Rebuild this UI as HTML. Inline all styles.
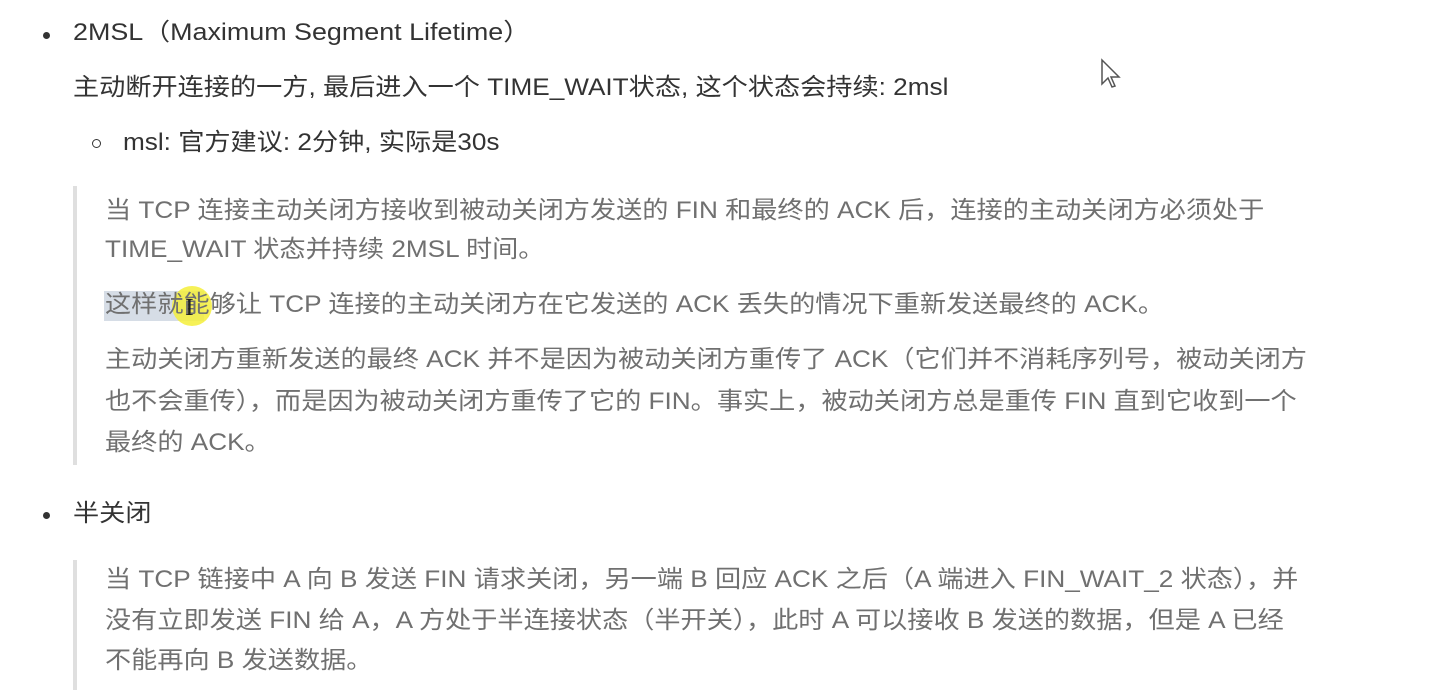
<!DOCTYPE html>
<html><head><meta charset="utf-8"><style>
body{margin:0;width:1451px;height:698px;background:#fff;overflow:hidden;position:relative;font-family:"Liberation Sans","Noto Sans CJK SC",sans-serif;font-size:24px;}
.t{position:absolute;white-space:nowrap;line-height:30px;transform:scaleX(1.09);transform-origin:0 50%;}
.d{color:#333}
.q{color:#707070}
.bar{position:absolute;left:73px;width:4px;background:#dfdfdf}
.dot{position:absolute;width:7px;height:7px;border-radius:50%;background:#333}
.circ{position:absolute;width:7px;height:7px;border-radius:50%;border:1.5px solid #333}
</style></head><body>
<div class="dot" style="left:43px;top:32px"></div>
<div class="t d" style="left:73px;top:18px;transform:scaleX(1.12)">2MSL（Maximum Segment Lifetime）</div>
<div class="t d" style="left:73px;top:73px">主动断开连接的一方, 最后进入一个 TIME_WAIT状态, 这个状态会持续: 2msl</div>
<div class="circ" style="left:92px;top:139px"></div>
<div class="t d" style="left:123px;top:128px">msl: 官方建议: 2分钟, 实际是30s</div>
<div class="bar" style="top:186px;height:279px"></div>
<div class="t q" style="left:105px;top:196px">当 TCP 连接主动关闭方接收到被动关闭方发送的 FIN 和最终的 ACK 后，连接的主动关闭方必须处于</div>
<div class="t q" style="left:105px;top:235px">TIME_WAIT 状态并持续 2MSL 时间。</div>
<div style="position:absolute;left:104px;top:291px;width:100px;height:30px;background:#d6dde6"></div>
<div style="position:absolute;left:172px;top:286px;width:40px;height:40px;border-radius:50%;background:#f4ef3a;opacity:.85"></div>
<div class="t q" style="left:105px;top:290px">这样就能够让 TCP 连接的主动关闭方在它发送的 ACK 丢失的情况下重新发送最终的 ACK。</div>
<div class="t" style="left:185px;top:293px;color:#222;font-family:'Liberation Serif',serif;font-size:24px">I</div>
<div class="t q" style="left:105px;top:345px">主动关闭方重新发送的最终 ACK 并不是因为被动关闭方重传了 ACK（它们并不消耗序列号，被动关闭方</div>
<div class="t q" style="left:105px;top:387px">也不会重传），而是因为被动关闭方重传了它的 FIN。事实上，被动关闭方总是重传 FIN 直到它收到一个</div>
<div class="t q" style="left:105px;top:428px">最终的 ACK。</div>
<div class="dot" style="left:43px;top:512px"></div>
<div class="t d" style="left:73px;top:499px">半关闭</div>
<div class="bar" style="top:560px;height:130px"></div>
<div class="t q" style="left:105px;top:565px">当 TCP 链接中 A 向 B 发送 FIN 请求关闭，另一端 B 回应 ACK 之后（A 端进入 FIN_WAIT_2 状态），并</div>
<div class="t q" style="left:105px;top:606px">没有立即发送 FIN 给 A，A 方处于半连接状态（半开关），此时 A 可以接收 B 发送的数据，但是 A 已经</div>
<div class="t q" style="left:105px;top:646px">不能再向 B 发送数据。</div>
<svg style="position:absolute;left:1100px;top:58px" width="24" height="32" viewBox="0 0 24 32"><path d="M2 2 L2 26 L8 20 L12 29 L15 28 L11 19 L19 19 Z" fill="#fff" stroke="#555" stroke-width="1.5"/></svg>
</body></html>
